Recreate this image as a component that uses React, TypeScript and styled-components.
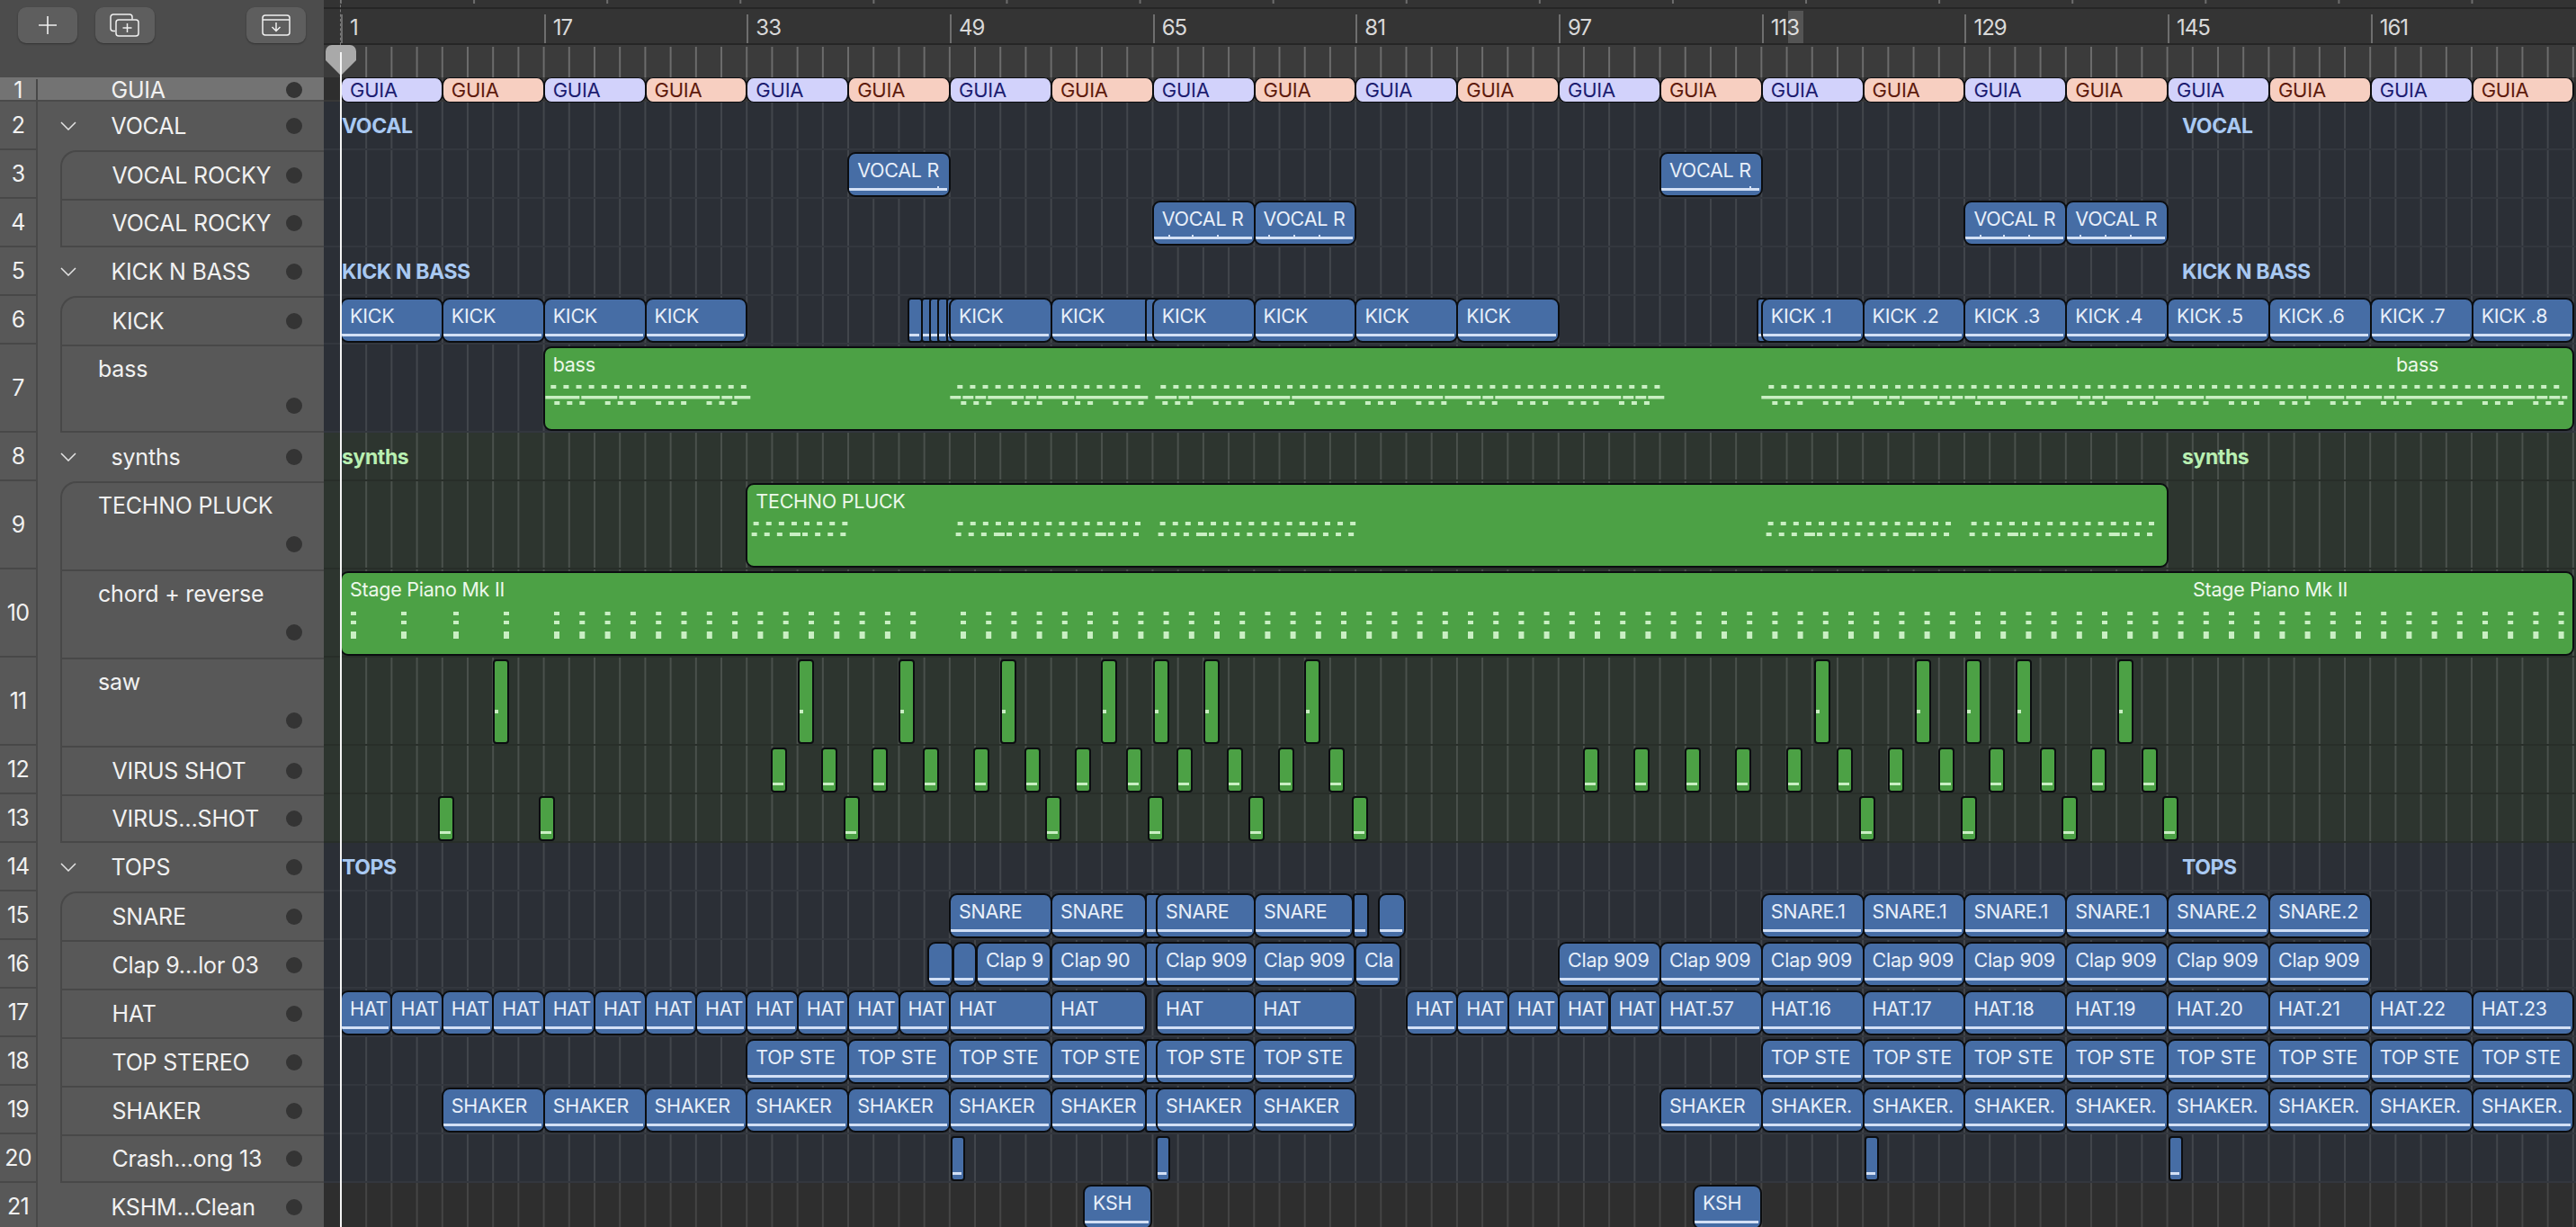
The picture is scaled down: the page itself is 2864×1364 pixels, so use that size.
import { ReactNode } from "react";
import styled, { createGlobalStyle } from "styled-components";

const BAR = 14.105;
const FIRST_BAR_X = 379;
const ARRANGE_X = 360;

const barToX = (bar: number) => FIRST_BAR_X + (bar - 1) * BAR;
const at = (pageX: number) => (pageX - FIRST_BAR_X) / BAR + 1;

const GlobalStyle = createGlobalStyle`
  html, body {
    margin: 0;
    padding: 0;
    background: #2b2f36;
  }
  * {
    box-sizing: border-box;
  }
`;

const Page = styled.div`
  position: relative;
  display: flex;
  width: 2864px;
  height: 1364px;
  overflow: hidden;
  font-family: Inter, "Liberation Sans", sans-serif;
`;

/* ---------- track list ---------- */

const Sidebar = styled.div`
  flex: none;
  width: ${ARRANGE_X}px;
  background: #585858;
  color: #f1f1f1;
  border-left: 2px solid #5e5e5e;
`;

const SideHeader = styled.div`
  display: flex;
  gap: 20px;
  height: 86px;
  margin-left: -2px;
  padding: 8px 20px 0;
  background: #4c4c4c;
`;

const HeaderButton = styled.div<{ $right?: boolean }>`
  display: flex;
  align-items: center;
  justify-content: center;
  width: 66px;
  height: 40px;
  margin-left: ${(p) => (p.$right ? "auto" : "0")};
  border-radius: 9px;
  background: #5e5e5e;
  box-shadow: 0 1px 2px rgba(0, 0, 0, 0.35);
`;

const TrackRow = styled.div<{ $height: number; $selected?: boolean }>`
  display: flex;
  height: ${(p) => p.$height}px;
  margin-left: -2px;
  padding-top: ${(p) => (p.$selected ? "2px" : "0")};
  background: ${(p) => (p.$selected ? "#737373" : "#585858")};
  border-bottom: ${(p) => (p.$selected ? "2px solid #4a4a4a" : "none")};
`;

const TrackNumber = styled.div<{ $selected?: boolean }>`
  flex: none;
  display: flex;
  align-items: center;
  justify-content: center;
  width: 42px;
  font-size: 25px;
  letter-spacing: -0.8px;
  border-right: 2px solid #484848;
  border-bottom: ${(p) => (p.$selected ? "none" : "2px solid #484848")};
`;

const Gutter = styled.div`
  flex: none;
  width: 25px;
`;

const TrackBody = styled.div<{
  $child?: boolean;
  $first?: boolean;
  $last?: boolean;
  $tall?: boolean;
}>`
  flex: 1;
  min-width: 0;
  display: flex;
  flex-direction: ${(p) => (p.$tall ? "column" : "row")};
  align-items: ${(p) => (p.$tall ? "stretch" : "center")};
  padding-left: ${(p) => (p.$tall ? 40 : p.$child ? 55.5 : 0)}px;
  border-left: ${(p) => (p.$child ? "2px solid #484848" : "none")};
  border-top: ${(p) => (p.$child ? "2px solid #484848" : "none")};
  border-bottom: ${(p) => (p.$last ? "2px solid #484848" : "none")};
  border-top-left-radius: ${(p) => (p.$first ? "18px" : "0")};
`;

const Chevron = styled.svg`
  flex: none;
  width: 18px;
  height: 10px;
  margin-left: 25px;
  margin-right: 38.5px;
`;

const TrackName = styled.div<{ $plain?: boolean; $tall?: boolean }>`
  flex: ${(p) => (p.$tall ? "none" : "1")};
  min-width: 0;
  padding-left: ${(p) => (p.$plain ? 81.5 : 0)}px;
  font-size: 25px;
  line-height: ${(p) => (p.$tall ? "50px" : "normal")};
  letter-spacing: -0.2px;
  white-space: nowrap;
`;

const MuteDot = styled.div<{ $tall?: boolean }>`
  flex: none;
  align-self: ${(p) => (p.$tall ? "flex-end" : "center")};
  width: 18px;
  height: 18px;
  margin-top: ${(p) => (p.$tall ? "auto" : "0")};
  margin-right: 24px;
  margin-bottom: ${(p) => (p.$tall ? "19px" : "0")};
  border-radius: 50%;
  background: #343434;
`;

/* ---------- ruler ---------- */

const Main = styled.div`
  flex: 1;
  min-width: 0;
`;

const Ruler = styled.div`
  display: flex;
  flex-direction: column;
  height: 86px;
  background: #262626;
`;

const TopStrip = styled.div`
  height: 8px;
  background:
    linear-gradient(90deg, #6d6d6d 0 2px, transparent 2px) 18px 0 / 148.1px 4px repeat-x,
    #333;
`;

const BarStrip = styled.div`
  display: flex;
  height: 38px;
  margin-top: 2px;
  padding: 6px 0 0 ${FIRST_BAR_X - ARRANGE_X}px;
  background: #343434;
  overflow: hidden;
`;

const BarCell = styled.div`
  position: relative;
  flex: none;
  width: ${BAR * 16}px;
  padding-left: 8px;
  font-size: 24px;
  line-height: 30px;
  letter-spacing: -1px;
  color: #d9d9d9;
  border-left: 2px solid #6e6e6e;
`;

const BarHighlight = styled.span`
  position: absolute;
  top: -4px;
  left: 27px;
  width: 17px;
  height: 36px;
  background: rgba(255, 255, 255, 0.16);
`;

const TickStrip = styled.div`
  height: 36px;
  margin-top: 2px;
  background:
    linear-gradient(90deg, #6c6c6c 0 2px, transparent 2px) 18px 2px / ${BAR * 2}px 100% repeat-x,
    #3b3b3b;
`;

/* ---------- arrange area ---------- */

const tints = {
  neutral: { bg: "#2e2e2e", grid: "#454545", line: "#383838" },
  blue: { bg: "#2b2f36", grid: "#42464c", line: "#33373e" },
  green: { bg: "#2d352f", grid: "#4a514c", line: "#282e29" },
};

const Lane = styled.div<{ $height: number; $tint: keyof typeof tints }>`
  position: relative;
  height: ${(p) => p.$height}px;
  background:
    linear-gradient(90deg, ${(p) => tints[p.$tint].grid} 0 2px, transparent 2px) 18px 0 / ${BAR * 2}px 100% repeat-x,
    ${(p) => tints[p.$tint].bg};

  &::after {
    content: "";
    position: absolute;
    left: 0;
    right: 0;
    bottom: 0;
    height: 2px;
    background: ${(p) => tints[p.$tint].line};
  }
`;

const tones = {
  blue: { bg: "#466da5", text: "#e8eff9", mark: "#d3e0f5" },
  green: { bg: "#4ca145", text: "#ecf8ea", mark: "#c9efc3" },
  lilac: { bg: "#d2d2fb", text: "#1d1d70", mark: "transparent" },
  peach: { bg: "#f7cfc1", text: "#5e1b0d", mark: "transparent" },
};

const RegionBox = styled.div<{ $tone: keyof typeof tones; $narrow?: boolean; $thin?: boolean }>`
  position: absolute;
  z-index: 1;
  top: ${(p) => (p.$thin ? "0" : "2px")};
  bottom: ${(p) => (p.$thin ? "-1px" : "2px")};
  padding: ${(p) => (p.$thin ? "0 0 0 9px" : "7px 0 0 9px")};
  overflow: hidden;
  font-size: ${(p) => (p.$thin ? "22px" : "21.5px")};
  line-height: ${(p) => (p.$thin ? "27px" : "22px")};
  letter-spacing: -0.25px;
  white-space: nowrap;
  color: ${(p) => tones[p.$tone].text};
  background: ${(p) => tones[p.$tone].bg};
  border: 2px solid #0b0d10;
  border-width: ${(p) => (p.$thin ? "1px 2px 1px 2px" : "2px")};
  border-radius: ${(p) => (p.$narrow ? "4px" : "9px")};
`;

const RepeatLabel = styled.span`
  position: absolute;
  z-index: 1;
  top: 7px;
`;

const Underline = styled.span<{ $tone: keyof typeof tones }>`
  position: absolute;
  left: 0;
  right: 2px;
  bottom: ${(p) => (p.$tone === "green" ? 6.5 : 5.5)}px;
  height: 2.5px;
  background: ${(p) => tones[p.$tone].mark};
`;

const UnderTick = styled.span`
  position: absolute;
  bottom: 8px;
  width: 2px;
  height: 2px;
  background: #d3e0f5;
`;

const NoteDot = styled.span`
  position: absolute;
  top: 54px;
  left: 0;
  width: 4px;
  height: 4px;
  background: #c9efc3;
`;

const NoteLayer = styled.svg`
  position: absolute;
  top: -2px;
  left: -2px;
`;

const SummaryLabel = styled.div<{ $color: string; $left: number }>`
  position: absolute;
  z-index: 1;
  top: 0;
  bottom: 0;
  left: ${(p) => p.$left}px;
  display: flex;
  align-items: center;
  font-size: 23px;
  font-weight: 700;
  letter-spacing: -0.4px;
  white-space: nowrap;
  color: ${(p) => p.$color};
`;

const PlayheadLine = styled.div`
  position: absolute;
  z-index: 3;
  top: 58px;
  bottom: 0;
  left: 378px;
  width: 2px;
  background: #f4f4f4;
`;

const PlayheadDash = styled.div`
  position: absolute;
  z-index: 3;
  top: 0;
  left: 378px;
  height: 50px;
  border-left: 1px dashed #7a7a7a;
`;

const PlayheadCap = styled.svg`
  position: absolute;
  z-index: 2;
  top: 50px;
  left: 362px;
`;

/* ---------- data ---------- */

type Tone = keyof typeof tones;

type Clip = {
  start: number;
  len: number;
  label?: string;
  tone?: Tone;
  ticks?: number[];
  dot?: boolean;
  repeatAt?: number;
};

const c = (start: number, len: number, label?: string, ticks?: number[]): Clip => ({ start, len, label, ticks });
const range = (from: number, to: number, label?: string): Clip => ({ start: at(from), len: at(to) - at(from), label });
const series = (start: number, step: number, count: number, label: (i: number) => string): Clip[] =>
  Array.from({ length: count }, (_, i) => c(start + i * step, step, label(i)));

const tiny = (x: number, w = 18, dot = false): Clip => ({
  start: at(x + 1),
  len: (w - 2) / BAR,
  tone: "green",
  dot,
});

const line = (first: number, step: number, count: number) => Array.from({ length: count }, (_, i) => first + i * step);

const sliver = (x1: number, x2: number) => range(x1, x2);

const KICKS: Clip[] = [
  ...series(1, 8, 4, () => "KICK"),
  sliver(1010, 1025),
  sliver(1025, 1034),
  sliver(1034, 1043),
  sliver(1043, 1053),
  sliver(1053, 1060),
  ...series(49, 8, 2, () => "KICK"),
  sliver(1274, 1290),
  ...series(65, 8, 4, () => "KICK"),
  sliver(1954, 1965),
  ...series(113, 8, 8, (i) => `KICK .${i + 1}`),
];

const HATS: Clip[] = [
  ...series(1, 4, 12, () => "HAT"),
  c(49, 8, "HAT"),
  range(1169, 1274, "HAT"),
  range(1286, 1395, "HAT"),
  c(73, 8, "HAT"),
  ...series(85, 4, 5, () => "HAT"),
  c(105, 8, "HAT.57"),
  ...series(113, 8, 8, (i) => `HAT.${16 + i}`),
];

const midRun = (label: string): Clip[] => [
  c(49, 8, label),
  range(1169, 1274, label),
  sliver(1274, 1290),
  range(1286, 1395, label),
];

type LaneData = {
  height: number;
  tint: keyof typeof tints;
  summary?: [string, string];
  clips?: Clip[];
  notes?: ReactNode;
  guia?: boolean;
};

const dots = (xs: number[], y: number, w = 6, h = 4) =>
  xs.map((x) => <rect key={`${x}-${y}`} x={x} y={y} width={w} height={h} />);

const bars = (pairs: [number, number][], y: number, h: number) =>
  pairs.map(([a, b]) => <rect key={`${a}-${y}`} x={a} y={y} width={b - a} height={h} />);

const triples = (first: number, count: number) =>
  Array.from({ length: count }, (_, i) => [0, 14, 28].map((o) => first + i * 56.4 + o)).flat();

const bassNotes = (
  <>
    {dots(line(612, 14.1, 16), 43)}
    {dots(line(1064, 14.1, 15), 43)}
    {dots(line(1290, 14.08, 40), 43)}
    {dots(line(1966, 14.08, 63), 43)}
    {bars(
      [
        [606, 644], [646, 686], [688, 800], [802, 814], [816, 834],
        [1056, 1068], [1070, 1082], [1084, 1096], [1098, 1138], [1140, 1152], [1154, 1194], [1196, 1276],
        [1284, 1308], [1310, 1322], [1324, 1434], [1436, 1604], [1606, 1646], [1648, 1660], [1662, 1802],
        [1804, 1816], [1818, 1830], [1832, 1850],
        [1958, 2057], [2059, 2098], [2100, 2112], [2114, 2154], [2156, 2168], [2170, 2182], [2184, 2196],
        [2198, 2310], [2312, 2324], [2326, 2338], [2340, 2394], [2396, 2450], [2452, 2564], [2566, 2606],
        [2608, 2648], [2650, 2662], [2664, 2818], [2820, 2832], [2834, 2846], [2848, 2854],
      ],
      55,
      3.5,
    )}
    {dots(triples(616, 4), 61)}
    {dots(triples(1068, 4), 61)}
    {dots(triples(1292, 10), 61)}
    {dots(triples(1970, 16), 61)}
  </>
);

const pluckRun = (start: number, count: number) => (
  <>
    {dots(line(start, 14.1, count), 43)}
    {line(start - 2, 14.1, count).map((x, i) => (
      <rect key={x} x={x} y={55} width={i === 3 || i === 11 ? 12 : 6} height={4} />
    ))}
  </>
);

const pluckNotes = (
  <>
    {pluckRun(838, 8)}
    {pluckRun(1065, 15)}
    {pluckRun(1290, 16)}
    {pluckRun(1966, 15)}
    {pluckRun(2192, 15)}
  </>
);

const chordXs = [390, 446, 504, 560, ...line(616, 28.3, 15), ...line(1068, 28.2, 64)];

const chordNotes = (
  <>
    {dots(chordXs, 45)}
    {dots(chordXs, 55)}
    {dots(chordXs, 67, 6, 8)}
  </>
);

const LANES: LaneData[] = [
  { height: 27, tint: "neutral", guia: true, clips: series(1, 8, 22, () => "GUIA") },
  { height: 54, tint: "blue", summary: ["VOCAL", "#a9c9f2"] },
  { height: 54, tint: "blue", clips: [c(41, 8, "VOCAL R", [98]), c(105, 8, "VOCAL R", [98])] },
  {
    height: 54,
    tint: "blue",
    clips: [
      c(65, 8, "VOCAL R", [16, 42, 70]),
      c(73, 8, "VOCAL R", [14, 42, 70]),
      c(129, 8, "VOCAL R", [16, 42, 70]),
      c(137, 8, "VOCAL R", [14, 42, 70]),
    ],
  },
  { height: 54, tint: "blue", summary: ["KICK N BASS", "#a9c9f2"] },
  { height: 54, tint: "blue", clips: KICKS },
  { height: 98, tint: "blue", clips: [{ start: 17, len: 160, label: "bass", tone: "green", repeatAt: 2664 }], notes: bassNotes },
  { height: 54, tint: "green", summary: ["synths", "#b9f0b2"] },
  { height: 98, tint: "green", clips: [{ start: 33, len: 112, label: "TECHNO PLUCK", tone: "green" }], notes: pluckNotes },
  { height: 98, tint: "green", clips: [{ start: 1, len: 176, label: "Stage Piano Mk II", tone: "green", repeatAt: 2438 }], notes: chordNotes },
  {
    height: 98,
    tint: "green",
    clips: [548, 886.5, 998.6, 1112, 1224, 1282, 1338, 1450, 2017, 2129, 2185, 2241, 2354].map((x) => tiny(x, 18, true)),
  },
  { height: 54, tint: "green", clips: [...line(856.6, 56.42, 12), ...line(1760, 56.42, 12)].map((x) => tiny(x)) },
  { height: 54, tint: "green", clips: [487, 599, 938, 1162, 1276, 1388, 1503, 2067, 2180, 2292, 2404].map((x) => tiny(x)) },
  { height: 54, tint: "blue", summary: ["TOPS", "#a9c9f2"] },
  {
    height: 54,
    tint: "blue",
    clips: [
      ...midRun("SNARE"),
      range(1395, 1504, "SNARE"),
      sliver(1505, 1521),
      sliver(1533, 1562),
      ...series(113, 8, 4, () => "SNARE.1"),
      ...series(145, 8, 2, () => "SNARE.2"),
    ],
  },
  {
    height: 54,
    tint: "blue",
    clips: [
      sliver(1032, 1059),
      sliver(1060, 1085),
      range(1086, 1168, "Clap 9"),
      range(1169, 1274, "Clap 90"),
      sliver(1274, 1290),
      range(1286, 1395, "Clap 909"),
      range(1395, 1506, "Clap 909"),
      range(1507, 1557, "Cla"),
      ...series(97, 8, 8, () => "Clap 909"),
    ],
  },
  { height: 54, tint: "blue", clips: HATS },
  {
    height: 54,
    tint: "blue",
    clips: [c(33, 8, "TOP STE"), c(41, 8, "TOP STE"), ...midRun("TOP STE"), c(73, 8, "TOP STE"), ...series(113, 8, 8, () => "TOP STE")],
  },
  {
    height: 54,
    tint: "blue",
    clips: [
      ...series(9, 8, 5, () => "SHAKER"),
      ...midRun("SHAKER"),
      c(73, 8, "SHAKER"),
      c(105, 8, "SHAKER"),
      ...series(113, 8, 8, () => "SHAKER."),
    ],
  },
  { height: 54, tint: "blue", clips: [1057, 1285, 2073, 2411].map((x) => ({ ...tiny(x, 16), tone: "blue" as Tone })) },
  { height: 54, tint: "neutral", clips: [range(1205, 1280, "KSH"), range(1883, 1958, "KSH")] },
];

type Track = {
  n: number;
  name: string;
  kind: "selected" | "group" | "child" | "plain";
  first?: boolean;
  last?: boolean;
};

const TRACKS: Track[] = [
  { n: 1, name: "GUIA", kind: "selected" },
  { n: 2, name: "VOCAL", kind: "group" },
  { n: 3, name: "VOCAL ROCKY", kind: "child", first: true },
  { n: 4, name: "VOCAL ROCKY", kind: "child", last: true },
  { n: 5, name: "KICK N BASS", kind: "group" },
  { n: 6, name: "KICK", kind: "child", first: true },
  { n: 7, name: "bass", kind: "child", last: true },
  { n: 8, name: "synths", kind: "group" },
  { n: 9, name: "TECHNO PLUCK", kind: "child", first: true },
  { n: 10, name: "chord + reverse", kind: "child" },
  { n: 11, name: "saw", kind: "child" },
  { n: 12, name: "VIRUS SHOT", kind: "child" },
  { n: 13, name: "VIRUS…SHOT", kind: "child", last: true },
  { n: 14, name: "TOPS", kind: "group" },
  { n: 15, name: "SNARE", kind: "child", first: true },
  { n: 16, name: "Clap 9…lor 03", kind: "child" },
  { n: 17, name: "HAT", kind: "child" },
  { n: 18, name: "TOP STEREO", kind: "child" },
  { n: 19, name: "SHAKER", kind: "child" },
  { n: 20, name: "Crash…ong 13", kind: "child", last: true },
  { n: 21, name: "KSHM…Clean", kind: "plain" },
];

const BAR_NUMBERS = [1, 17, 33, 49, 65, 81, 97, 113, 129, 145, 161];

/* ---------- parts ---------- */

const PlusIcon = () => (
  <svg width="22" height="22" viewBox="0 0 22 22" fill="none" stroke="#f0f0f0" strokeWidth="1.6">
    <path d="M11 1v20M1 11h20" />
  </svg>
);

const NewStackIcon = () => (
  <svg width="34" height="26" viewBox="0 0 34 26" fill="none" stroke="#f0f0f0" strokeWidth="1.5">
    <path d="M6 19.5H4a3 3 0 0 1-3-3V4a3 3 0 0 1 3-3h18a3 3 0 0 1 3 3v2.5" />
    <rect x="7" y="7" width="25" height="18" rx="3" />
    <path d="M19.5 11v10M14.5 16h10" />
  </svg>
);

const DownloadBoxIcon = () => (
  <svg width="32" height="24" viewBox="0 0 32 24" fill="none" stroke="#f0f0f0" strokeWidth="1.5">
    <rect x="1" y="1" width="30" height="22" rx="3" />
    <path d="M1 6h30M16 9v9M11.5 14l4.5 4.5 4.5-4.5" />
  </svg>
);

const ChevronIcon = () => (
  <Chevron viewBox="0 0 18 10" fill="none" stroke="#e4e4e4" strokeWidth="1.5">
    <path d="M1 1l8 8 8-8" />
  </Chevron>
);

const TrackItem = ({ track, height }: { track: Track; height: number }) => {
  const tall = height > 60;
  const child = track.kind === "child";
  const selected = track.kind === "selected";
  return (
    <TrackRow $height={height} $selected={selected}>
      <TrackNumber $selected={selected}>{track.n}</TrackNumber>
      {child && <Gutter />}
      <TrackBody $child={child} $first={track.first} $last={track.last} $tall={tall}>
        {track.kind === "group" && <ChevronIcon />}
        <TrackName $plain={selected || track.kind === "plain"} $tall={tall}>
          {track.name}
        </TrackName>
        <MuteDot $tall={tall} />
      </TrackBody>
    </TrackRow>
  );
};

const Region = ({ clip, guiaIndex, notes, height }: { clip: Clip; guiaIndex?: number; notes?: ReactNode; height: number }) => {
  const left = barToX(clip.start) - 1;
  const width = clip.len * BAR + 2;
  const guia = guiaIndex !== undefined;
  const tone: Tone = guia ? (guiaIndex % 2 === 0 ? "lilac" : "peach") : clip.tone ?? "blue";
  const hasUnder = !guia && !notes && !clip.dot;

  return (
    <RegionBox $tone={tone} $narrow={width < 24} $thin={guia} style={{ left: left - ARRANGE_X, width }}>
      {clip.label}
      {clip.repeatAt && <RepeatLabel style={{ left: clip.repeatAt - left - 2 }}>{clip.label}</RepeatLabel>}
      {notes && (
        <NoteLayer
          width={width}
          height={height - 4}
          viewBox={`${left} 0 ${width} ${height - 4}`}
          fill={tones.green.mark}
        >
          {notes}
        </NoteLayer>
      )}
      {hasUnder && <Underline $tone={tone} />}
      {clip.ticks?.map((x) => (
        <UnderTick key={x} style={{ left: x }} />
      ))}
      {clip.dot && <NoteDot />}
    </RegionBox>
  );
};

const App = () => {
  return (
    <Page>
      <GlobalStyle />
      <Sidebar>
        <SideHeader>
          <HeaderButton>
            <PlusIcon />
          </HeaderButton>
          <HeaderButton>
            <NewStackIcon />
          </HeaderButton>
          <HeaderButton $right>
            <DownloadBoxIcon />
          </HeaderButton>
        </SideHeader>
        {TRACKS.map((track, i) => (
          <TrackItem key={track.n} track={track} height={LANES[i].height} />
        ))}
      </Sidebar>

      <Main>
        <Ruler>
          <TopStrip />
          <BarStrip>
            {BAR_NUMBERS.map((n) => (
              <BarCell key={n}>
                {n}
                {n === 113 && <BarHighlight />}
              </BarCell>
            ))}
          </BarStrip>
          <TickStrip />
        </Ruler>

        {LANES.map((lane, i) => (
          <Lane key={i} $height={lane.height} $tint={lane.tint}>
            {lane.summary && (
              <>
                <SummaryLabel $color={lane.summary[1]} $left={20}>
                  {lane.summary[0]}
                </SummaryLabel>
                <SummaryLabel $color={lane.summary[1]} $left={2066}>
                  {lane.summary[0]}
                </SummaryLabel>
              </>
            )}
            {lane.clips?.map((clip, j) => (
              <Region
                key={j}
                clip={clip}
                guiaIndex={lane.guia ? j : undefined}
                notes={lane.notes}
                height={lane.height}
              />
            ))}
          </Lane>
        ))}
      </Main>

      <PlayheadDash />
      <PlayheadCap width="34" height="36" viewBox="0 0 34 36">
        <path d="M7 0h20a7 7 0 0 1 7 7v10L17 34 0 17V7a7 7 0 0 1 7-7z" fill="#a9a9a9" />
      </PlayheadCap>
      <PlayheadLine />
    </Page>
  );
};

export default App;
